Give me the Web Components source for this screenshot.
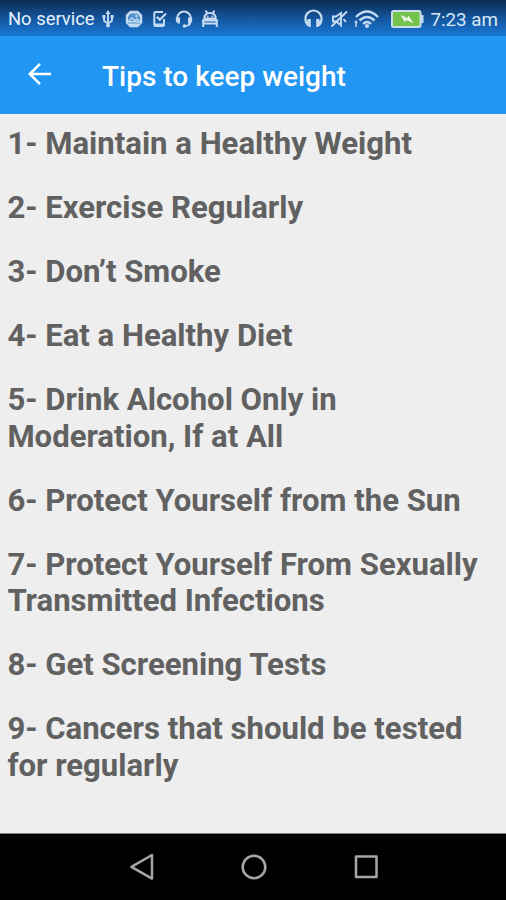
<!DOCTYPE html>
<html lang="en">
<head>
<meta charset="UTF-8">
<meta name="viewport" content="width=device-width, initial-scale=1.0">
<title>Tips to keep weight</title>
<style>
  body {
    margin: 0;
    height: 900px;
    overflow: hidden;
    font-family: Roboto, sans-serif;
  }
</style>
</head>
<body>
<tips-app></tips-app>

<script>
class StatusBar extends HTMLElement {

    constructor(){
        super();
        this.shadowDOM = this.attachShadow({mode : "open"});
    }
    connectedCallback() {
        this.render();
    }

    render() {
        this.shadowDOM.innerHTML = `
        <style>
        :host {
            display: flex;
            align-items: center;
            justify-content: space-between;
            box-sizing: border-box;
            height: 36px;
            padding: 1px 8px 0 8px;
            background: linear-gradient(#0b2c52 0%, #0e3767 15%, #14559c 50%, #1769bd 78%, #1976d2 100%);
            color: #d9e8f8;
            font-size: 18px;
            line-height: 22px;
            white-space: nowrap;
        }

        .left, .right {
            display: flex;
            align-items: center;
        }

        .service {
            width: 94px;
            padding-top: 1px;
            color: #e6f1fc;
            font-size: 18.4px;
        }

        .time {
            margin-left: 6px;
            padding-top: 2px;
            font-size: 18.8px;
        }

        svg {
            display: block;
            fill: none;
            stroke: #c5dbf2;
            stroke-width: 2;
        }

        .solid {
            fill: #c5dbf2;
            stroke: none;
        }
        </style>

        <div class="left">
            <span class="service">No service</span>
            <!-- usb -->
            <svg width="12" height="18" viewBox="0 0 12 18">
                <path d="M6 3v12M2 7v3q0 2 4 3M10 6v4q0 2-4 3" stroke-width="1.9"/>
                <path class="solid" d="M6 0l2.6 4H3.4zM.4 5h3v3h-3zM8.6 5h3v3h-3z"/>
                <circle class="solid" cx="6" cy="15.5" r="1.900"/>
            </svg>
            <!-- picture badge -->
            <svg width="18" height="18" viewBox="0 0 18 18" style="margin-left:11px">
                <path class="solid" d="M5 .7h8L17.2 5v8L13 17.3H5L.8 13V5z"/>
                <path d="M3.500 11V7l2-3h7l2 3v4" fill="#5291ca" stroke="#5291ca" stroke-width="1"/>
                <path d="M3 12l4-4 3 3 2-2 3 3" stroke-width="1.300"/>
                <path d="M3 13h12" stroke="#5291ca" stroke-width="1"/>
                <circle class="solid" cx="11.500" cy="6" r="1.300"/>
            </svg>
            <!-- phone with check -->
            <svg width="14" height="18" viewBox="0 0 14 18" style="margin-left:10px">
                <path d="M9.500 2H2.800Q1.300 2 1.300 3.500v11Q1.300 16 2.800 16h6.700q1.500 0 1.500-1.500V9"/>
                <path class="solid" d="M1 13.500h10V16.500H2zM2 1h8v2H2z"/>
                <path d="M3.800 6.800l3 3L13 3.500"/>
            </svg>
            <!-- headset -->
            <svg width="18" height="18" viewBox="0 0 18 18" style="margin-left:8px">
                <path d="M2.200 10V8a6.800 6.500 0 0 1 13.600 0v2M15.500 12q-.5 4-6 4"/>
                <path class="solid" d="M.8 7.500h4.200v6H3Q.8 12.500.8 10zM17.200 7.500H13v6h2q2.200-1 2.200-3.500z"/>
                <circle class="solid" cx="9.500" cy="16" r="1.800"/>
            </svg>
            <!-- android on a stand -->
            <svg width="18" height="18" viewBox="0 0 18 18" style="margin-left:8px">
                <path d="M3.300 8.500q.2-5.500 5.700-5.500t5.700 5.500zM4.500.6l2 3M13.500.6l-2 3M1 10.500h16" stroke-width="1.900"/>
                <path d="M2.200 10v7M15.800 10v7M2 13.600h14"/>
                <circle class="solid" cx="6.800" cy="6.300" r=".9"/>
                <circle class="solid" cx="11.200" cy="6.300" r=".9"/>
            </svg>
        </div>

        <div class="right">
            <!-- headphones -->
            <svg width="19" height="19" viewBox="0 0 19 19">
                <path d="M4.500 16.500Q1.400 14 1.400 9.500a8.100 8 0 0 1 16.200 0q0 4.500-3.100 7" stroke-width="2.200"/>
                <path class="solid" d="M3.800 10h3v8h-2L2.500 15zM15.200 10h-3v8h2l2.300-3z"/>
            </svg>
            <!-- muted speaker -->
            <svg width="18" height="18" viewBox="0 0 18 18" style="margin-left:7px">
                <path d="M3 6.500h3L11 3v12.500L6.500 11.500H3z" stroke-width="1.900"/>
                <path d="M1.500 16.500L17 1.500M13.500 9l2.500 3" stroke-width="1.900"/>
            </svg>
            <!-- wifi -->
            <svg width="26" height="20" viewBox="0 0 26 20" style="margin-left:6px">
                <path d="M2 8Q13-3 24 8M5.500 11.500q7.500-7 15 0M9 15q4-4 8 0" stroke-width="2.400"/>
                <circle class="solid" cx="13" cy="17" r="2.100"/>
                <path class="solid" d="M2 11l1.800 3H2.700v4H1.300v-4H.2z"/>
            </svg>
            <!-- charging battery -->
            <svg width="33" height="18" viewBox="0 0 33 18" style="margin-left:11px">
                <rect x="1" y="1" width="28.500" height="16" rx="1.500" fill="#74c34c" stroke="#cbdcec"/>
                <path class="solid" d="M30 5h2.500v8H30z"/>
                <path d="M9.500 5l7 3 1-2.500L22.500 13l-7.500-3-1 2.500z" fill="#edf7e8" stroke="none"/>
            </svg>
            <span class="time">7:23 am</span>
        </div>
        `
    }
}

class AppToolbar extends HTMLElement {

    constructor(){
        super();
        this.shadowDOM = this.attachShadow({mode : "open"});
    }
    connectedCallback() {
        this.render();
    }

    render() {
        this.shadowDOM.innerHTML = `
        <style>
        :host {
            display: flex;
            align-items: center;
            box-sizing: border-box;
            height: 78px;
            padding-left: 27px;
            background-color: #2196f3;
            color: white;
        }

        svg {
            display: block;
            margin-bottom: 2px;
        }

        h1 {
            margin: 4px 0 0 51px;
            font-size: 28px;
            font-weight: 500;
            line-height: 34px;
            white-space: nowrap;
        }
        </style>

        <svg width="24" height="24" viewBox="0 0 24 24" fill="none" stroke="white" stroke-width="2.600">
            <path d="M24 12H3M13 1.800L2.800 12 13 22.200"/>
        </svg>
        <h1><slot></slot></h1>
        `
    }
}

class TipItem extends HTMLElement {

    constructor(){
        super();
        this.shadowDOM = this.attachShadow({mode : "open"});
    }
    connectedCallback() {
        this.render();
    }

    render() {
        this.shadowDOM.innerHTML = `
        <style>
        :host {
            display: block;
            color: #616161;
            font-size: 31.1px;
            font-weight: bold;
            line-height: 36.5px;
        }
        </style>

        <slot></slot>
        `
    }
}

class NavButtons extends HTMLElement {

    constructor(){
        super();
        this.shadowDOM = this.attachShadow({mode : "open"});
    }
    connectedCallback() {
        this.render();
    }

    render() {
        this.shadowDOM.innerHTML = `
        <style>
        :host {
            display: flex;
            align-items: center;
            justify-content: center;
            gap: 86px;
            box-sizing: border-box;
            height: 67px;
            padding-left: 2px;
            border-top: 1px solid #808080;
            background-color: black;
        }

        svg {
            display: block;
            fill: none;
            stroke: #a6a6a6;
            stroke-width: 2.5;
            stroke-linejoin: round;
        }
        </style>

        <svg width="26" height="28" viewBox="0 0 26 28"><path d="M23 2v23.600L2.400 13.800z"/></svg>
        <svg width="26" height="28" viewBox="0 0 26 28"><circle cx="13" cy="14" r="11.300"/></svg>
        <svg width="26" height="28" viewBox="0 0 26 28"><rect x="3" y="3.500" width="20.500" height="20.500"/></svg>
        `
    }
}

class TipsApp extends HTMLElement {

    constructor(){
        super();
        this.shadowDOM = this.attachShadow({mode : "open"});
    }
    connectedCallback() {
        this.render();
    }

    render() {
        const tips = [
            'Maintain a Healthy Weight',
            'Exercise Regularly',
            'Don’t Smoke',
            'Eat a Healthy Diet',
            'Drink Alcohol Only in Moderation, If at All',
            'Protect Yourself from the Sun',
            'Protect Yourself From Sexually Transmitted Infections',
            'Get Screening Tests',
            'Cancers that should be tested for regularly'
        ];

        this.shadowDOM.innerHTML = `
        <style>
        :host {
            display: flex;
            flex-direction: column;
            height: 900px;
            background-color: #eeeeee;
        }

        main {
            display: flex;
            flex-direction: column;
            flex: 1;
            gap: 27.5px;
            padding: 12.4px 7px 0 7.4px;
        }
        </style>

        <status-bar></status-bar>
        <app-toolbar>Tips to keep weight</app-toolbar>
        <main>
            ${tips.map((tip, i) => `<tip-item>${i + 1}- ${tip}</tip-item>`).join('')}
        </main>
        <nav-buttons></nav-buttons>
        `
    }
}

customElements.define('status-bar', StatusBar);
customElements.define('app-toolbar', AppToolbar);
customElements.define('tip-item', TipItem);
customElements.define('nav-buttons', NavButtons);
customElements.define('tips-app', TipsApp);
</script>
</body>
</html>
